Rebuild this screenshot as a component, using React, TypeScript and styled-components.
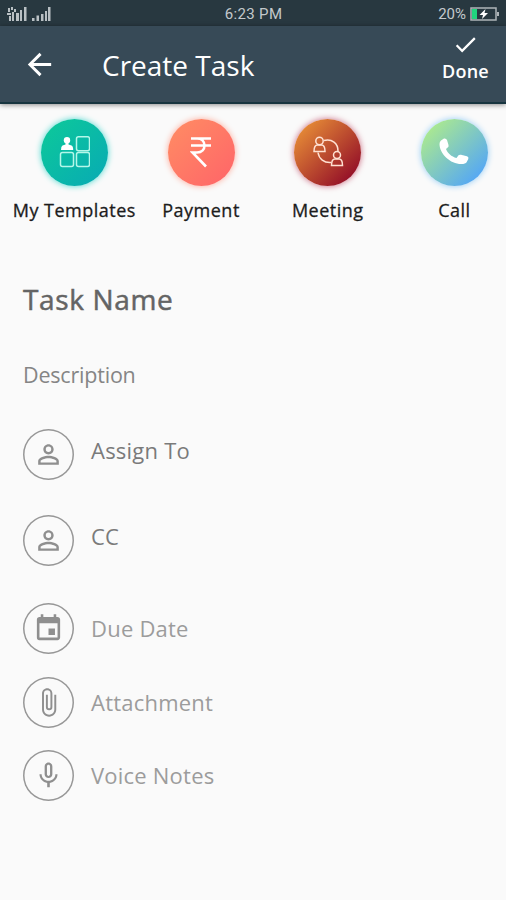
import React from 'react';
import styled, { createGlobalStyle } from 'styled-components';
import { MdArrowBack, MdCheck, MdPersonOutline, MdEvent, MdAttachFile, MdMicNone } from 'react-icons/md';

const Global = createGlobalStyle`
  * { box-sizing: border-box; }
  body { margin: 0; background: #fafafa; font-family: 'Open Sans', sans-serif; }
  svg { display: block; flex: none; }
`;
const Screen = styled.main`
  width: 506px; height: 900px; overflow: hidden; background: #fafafa;
`;
const StatusBar = styled.div`
  height: 26px; padding: 1px 6px 0 7px; background: #283840; color: #c3c9cc;
  display: grid; grid-template-columns: 1fr auto 1fr; align-items: center;
  font: 400 15px/26px Roboto, sans-serif;
`;
const Clock = styled.span`letter-spacing: 0.35px;`;
const Battery = styled.div`display: flex; justify-content: flex-end; align-items: center; gap: 4px;`;
const Header = styled.header`
  height: 78px; background: #374a57; border-bottom: 2px solid #17353f; color: #fff;
  display: flex; align-items: center; padding-left: 22px;
  box-shadow: 0 1px 5px rgba(0, 0, 0, 0.45);
`;
const Title = styled.h1`
  margin: 1px 0 0 45px; font-size: 28px; line-height: 36px; font-weight: 400; letter-spacing: 0; white-space: nowrap;
`;
const Done = styled.button`
  margin-left: auto; width: 81px; height: 72px; padding: 3px 0 0; border: 0; background: none; color: #fff;
  display: flex; flex-direction: column; align-items: center; font: 600 18px/26px 'Open Sans', sans-serif;
  letter-spacing: 0.2px;
`;
const Shortcuts = styled.nav`
  display: grid; grid-template-columns: repeat(4, 126.7px); padding: 14.5px 0 0 11px; height: 156px;
`;
const Shortcut = styled.div`
  display: flex; flex-direction: column; align-items: center; gap: 12px;
`;
const Disc = styled.div<{ $fill: string; $glow: string }>`
  width: 67px; height: 67px; border-radius: 50%; background: ${p => p.$fill};
  box-shadow: 0 0 6px ${p => p.$glow}; display: grid; place-items: center;
`;
const Label = styled.span`
  font-size: 18px; line-height: 24px; color: #1c1c1c; white-space: nowrap; letter-spacing: 0.5px;
  -webkit-text-stroke: 0.3px currentColor;
`;
const Form = styled.section`padding: 20px 23px 0;`;
const TaskName = styled.h2`
  margin: 0; height: 39px; font-size: 28px; line-height: 39px; font-weight: 400; color: #646464; letter-spacing: 0.65px;
  -webkit-text-stroke: 0.5px currentColor;
`;
const Description = styled.p`
  margin: 41px 0 38.5px; font-size: 21.5px; line-height: 30px; color: #858585; letter-spacing: -0.2px;
`;
const Row = styled.div<{ $gap: number; $color: string; $lift?: number }>`
  display: flex; align-items: center; height: 51px; margin-bottom: ${p => p.$gap}px; gap: 17px;
  font-size: 22px; line-height: 30px; color: ${p => p.$color}; letter-spacing: 0.22px;
  span { padding-bottom: ${p => p.$lift ?? 1}px; }
`;
const Ring = styled.div`
  width: 51px; height: 51px; box-shadow: inset 0 0 0 1.5px #979797; border-radius: 50%; color: #8f8f8f;
  display: grid; place-items: center;
`;

const SignalIcon = () => (
  <svg width="44" height="16" viewBox="0 0 44 16" fill="#b9c0c4">
    <path d="M1 2h2v4H1zM4 1h2v3H4zM7 3h2v3H7zM0 7h4v2H0zM2 10h2v5H2zM5 6h2v9H5zM9 7h3v8H9zM13 4h2v11h-2zM17 1h2.500v14H17zM25 12h2.500v3H25zM29.500 9.500H32V15h-2.500zM34 8h2.500v7H34zM38 5h2v10h-2zM41 1h2.500v14H41z" />
  </svg>
);
const BatteryIcon = () => (
  <svg width="30" height="15" viewBox="0 0 30 15">
    <rect x="1" y="1" width="25" height="12" fill="none" stroke="#aeb5b8" strokeWidth="1.500" />
    <path d="M27 5h2v4h-2z" fill="#aeb5b8" /><path d="M2 2h5v10H2z" fill="#20d57e" />
    <path d="M15.500 2 9.500 8h3.500l-1 4 6-6h-3.500z" fill="#fff" />
  </svg>
);
const TemplatesIcon = () => (
  <svg width="32" height="32" viewBox="0 0 32 32" fill="none" stroke="#b4f7e9" strokeWidth="1.500">
    <rect x="18.500" y="0.800" width="13" height="14" rx="2" /><rect x="2.500" y="16.500" width="13" height="14" rx="2" />
    <rect x="18.500" y="16.500" width="13" height="14" rx="2" />
    <circle cx="9" cy="4.300" r="3.200" fill="#fff" stroke="none" />
    <path d="M7.500 7h3v1.500l3 1q1.700.8 1.700 4.500H3q0-3.700 1.500-4.500l3-1z" fill="#fff" stroke="none" />
  </svg>
);
const RupeeIcon = () => (
  <svg width="22" height="32" viewBox="0 0 22 32" fill="none" stroke="#fff" strokeWidth="2.600">
    <path d="M1 2.500h20M1 9.500h20M1 2.500h6c10 0 10 14 0 14H2.500L16 30.500" />
  </svg>
);
const MeetingIcon = () => (
  <svg width="32" height="32" viewBox="0 0 32 32" fill="none" stroke="#ffe1d2" strokeWidth="1.500">
    <circle cx="7.500" cy="5" r="3.700" /><path d="M2 15.500c0-5 2-6.500 3.500-6.500h4c1.500 0 3.500 1.500 3.500 6.500z" />
    <circle cx="25" cy="19" r="3.500" /><path d="M19.500 29.500c0-5 2-6.500 3.500-6.500h4c1.500 0 3.500 1.500 3.500 6.500z" />
    <path d="M12 4.500c8-2 14 3 14 10.500M6 16.500C7 23 12 27 19 26.500" />
  </svg>
);
const PhoneIcon = () => (
  <svg width="32" height="30" viewBox="0 0 32 30" fill="#fff">
    <path d="M3 3.500 6 1.500Q8 1 9 3l1.500 5q.5 1.500-.8 2.500l-1.700 1.500c1.500 4 5.500 7.700 10.500 9l2-2.700q1-1 2.500-.5l6 1.500q2 .8 1.300 2.700l-1.700 3.200q-1 1.800-5.400 1.800C12.500 27 1.500 17 1.500 7q0-2.500 1.500-3.500z" />
  </svg>
);

const shortcuts = [
  { label: 'My Templates', fill: 'linear-gradient(135deg, #0cc59d 15%, #08adb2 90%)', glow: '#49d8cf', icon: <TemplatesIcon /> },
  { label: 'Payment', fill: 'linear-gradient(135deg, #ff8964 10%, #ff6868 90%)', glow: '#ffa795', icon: <RupeeIcon /> },
  { label: 'Meeting', fill: 'linear-gradient(135deg, #e99037 8%, #8f0827 92%)', glow: '#c9657c', icon: <MeetingIcon /> },
  { label: 'Call', fill: 'linear-gradient(135deg, #b0ed8a 8%, #4fa3fb 92%)', glow: '#8fcaf5', icon: <PhoneIcon /> },
];
const fields = [
  { label: 'Assign To', icon: <MdPersonOutline size={31} />, gap: 35, color: '#7a7a7a', lift: 8 },
  { label: 'CC', icon: <MdPersonOutline size={31} />, gap: 37.5, color: '#7a7a7a', lift: 8 },
  { label: 'Due Date', icon: <MdEvent size={31} />, gap: 22.5, color: '#9c9c9c' },
  { label: 'Attachment', icon: <MdAttachFile size={31} />, gap: 22.5, color: '#9c9c9c' },
  { label: 'Voice Notes', icon: <MdMicNone size={31} />, gap: 0, color: '#9c9c9c' },
];

export default function App() {
  return (
    <Screen>
      <Global />
      <StatusBar><SignalIcon /><Clock>6:23 PM</Clock><Battery>20%<BatteryIcon /></Battery></StatusBar>
      <Header>
        <MdArrowBack size={35} />
        <Title>Create Task</Title>
        <Done><MdCheck size={27} />Done</Done>
      </Header>
      <Shortcuts>
        {shortcuts.map(s => (
          <Shortcut key={s.label}><Disc $fill={s.fill} $glow={s.glow}>{s.icon}</Disc><Label>{s.label}</Label></Shortcut>
        ))}
      </Shortcuts>
      <Form>
        <TaskName>Task Name</TaskName>
        <Description>Description</Description>
        {fields.map(f => (
          <Row key={f.label} $gap={f.gap} $color={f.color} $lift={f.lift}><Ring>{f.icon}</Ring><span>{f.label}</span></Row>
        ))}
      </Form>
    </Screen>
  );
}
